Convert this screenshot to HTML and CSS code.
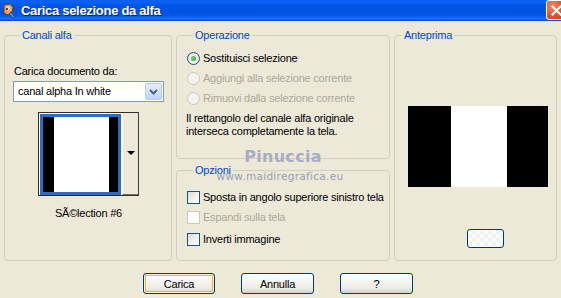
FILE: index.html
```html
<!DOCTYPE html>
<html lang="it">
<head>
<meta charset="utf-8">
<title>Carica selezione da alfa</title>
<link rel="stylesheet" href="styles.css">
</head>
<body>
<div class="window">
  <div class="titlebar">
    <svg class="appicon" width="16" height="16" viewBox="0 0 16 16">
      <path d="M3 2 L9 1 L12 4 L11 9 L7 12 L3 10 Z" fill="#E8A060" stroke="#7A3A10" stroke-width="1"/>
      <path d="M5 4 L8 3 L10 6 L7 8 Z" fill="#FFD9A0"/>
      <path d="M10 9 L14 14 L12 15 L8 11 Z" fill="#5A8FE0" stroke="#1A3A80" stroke-width="0.8"/>
      <circle cx="6" cy="6" r="1" fill="#3A1A00"/>
    </svg>
    <span class="title">Carica selezione da alfa</span>
    <span class="close">
      <svg width="21" height="21" viewBox="0 0 21 21"><path d="M6 6 L15 15 M15 6 L6 15" stroke="#fff" stroke-width="2.2" stroke-linecap="square"/></svg>
    </span>
  </div>
  <div class="content">
    <div class="panels">
      <section class="group g-canali">
        <h2 class="legend">Canali alfa</h2>
        <div class="field-label">Carica documento da:</div>
        <div class="select">
          <span class="sel-text">canal alpha In white</span>
          <span class="sel-btn"><svg width="9" height="6" viewBox="0 0 9 6"><path d="M1 1 L4.5 4.5 L8 1" fill="none" stroke="#4D6185" stroke-width="2"/></svg></span>
        </div>
        <div class="thumb">
          <div class="thumb-img">
            <div class="bar-black b1"></div>
            <div class="bar-white w1"></div>
            <div class="bar-black b2"></div>
          </div>
          <div class="thumb-btn"><span class="tri"></span></div>
        </div>
        <div class="caption">SÃ©lection #6</div>
      </section>
      <div class="col">
        <section class="group g-op">
          <h2 class="legend">Operazione</h2>
          <div class="rows">
            <div class="row"><span class="radio checked"></span><span>Sostituisci selezione</span></div>
            <div class="row disabled"><span class="radio"></span><span>Aggiungi alla selezione corrente</span></div>
            <div class="row disabled"><span class="radio"></span><span>Rimuovi dalla selezione corrente</span></div>
          </div>
          <p class="note">Il rettangolo del canale alfa originale<br>interseca completamente la tela.</p>
        </section>
        <section class="group g-opt">
          <h2 class="legend">Opzioni</h2>
          <div class="rows">
            <div class="row"><span class="check"></span><span>Sposta in angolo superiore sinistro tela</span></div>
            <div class="row disabled"><span class="check"></span><span>Espandi sulla tela</span></div>
            <div class="row r3"><span class="check"></span><span>Inverti immagine</span></div>
          </div>
        </section>
      </div>
      <section class="group g-ant">
        <h2 class="legend">Anteprima</h2>
        <div class="preview">
          <div class="pv-black p1"></div>
          <div class="pv-white"></div>
          <div class="pv-black p2"></div>
        </div>
        <div class="small-btn"></div>
      </section>
    </div>
    <div class="buttons">
      <button class="btn default">Carica</button>
      <button class="btn">Annulla</button>
      <button class="btn">?</button>
    </div>
    <div class="watermark">
      <div class="wm-name">Pinuccia</div>
      <div class="wm-url">www.maidiregrafica.eu</div>
    </div>
  </div>
</div>
</body>
</html>
```
FILE: styles.css
```css
* { box-sizing: border-box; }
html, body { margin: 0; padding: 0; }
body {
  width: 561px;
  height: 298px;
  overflow: hidden;
  background: #ECE9D8;
  font-family: Tahoma, "Liberation Sans", Arial, sans-serif;
  font-size: 11px;
  line-height: 13px;
  letter-spacing: -0.22px;
  color: #000;
}
.window { width: 561px; height: 298px; }

.titlebar {
  height: 21px;
  display: flex;
  align-items: center;
  position: relative;
  letter-spacing: normal;
  background: linear-gradient(#0A5FEC 0, #0C62F2 8%, #0056E6 25%, #0053E0 55%, #0058EA 75%, #1A6DFF 88%, #0A5AF0 94%, #0046C8 100%);
}
.appicon { margin: 0 4px 0 1px; flex: none; }
.title {
  color: #fff;
  font-family: "Liberation Sans", Arial, sans-serif;
  font-weight: bold;
  font-size: 13px;
  letter-spacing: -0.3px;
  text-shadow: 1px 1px 0 #0A1883;
}
.close {
  position: absolute;
  right: -6px;
  top: 0;
  width: 21px;
  height: 20px;
  border: 1px solid #fff;
  border-radius: 3px;
  background: radial-gradient(circle at 30% 30%, #F08B6A 0, #E2583A 45%, #C33818 100%);
  display: flex;
  align-items: center;
  justify-content: center;
}
.close svg { display: block; }

.content { position: relative; height: 277px; }
.panels {
  display: flex;
  gap: 4px;
  padding: 14px 0 0 4px;
}
.group {
  border: 1px solid #D0D0BF;
  border-radius: 4px;
  margin: 0;
  height: 226px;
}
.legend {
  margin: -7px 0 0 7px;
  padding: 0 2px;
  width: fit-content;
  background: #ECE9D8;
  color: #0046D5;
  font-size: 11px;
  font-weight: normal;
  line-height: 13px;
}

/* Canali alfa */
.g-canali { width: 168px; padding: 0 7px 0 8px; }
.field-label { margin-top: 23px; padding-left: 1px; }
.select {
  margin-top: 3px;
  width: 151px;
  height: 21px;
  border: 1px solid #7F9DB9;
  background: #fff;
  display: flex;
  align-items: center;
  justify-content: space-between;
  padding: 1px;
}
.sel-text { padding-left: 3px; }
.sel-btn {
  width: 17px;
  height: 17px;
  border: 1px solid #B9CBF3;
  border-radius: 2px;
  background: linear-gradient(#E4ECFE, #C1D3FB);
  display: flex;
  align-items: center;
  justify-content: center;
}
.sel-btn svg { display: block; }
.thumb {
  margin: 10px 0 0 25px;
  width: 101px;
  height: 84px;
  border: 1px solid #2E2E2E;
  border-right-color: #404040;
  padding: 1px 0 0 1px;
  background: #fff;
  display: flex;
}
.thumb-img {
  width: 81px;
  height: 81px;
  border: 3px solid #316AC5;
  display: flex;
}
.bar-black { background: #000; }
.b1 { width: 11px; }
.w1 { width: 55px; background: #fff; }
.b2 { flex: 1; }
.thumb-btn {
  flex: 1;
  margin: -1px 0 0 1px;
  background: #ECE9D8;
  border-left: 1px solid #fff;
  border-bottom: 1px solid #716F64;
  display: flex;
  align-items: center;
  justify-content: center;
}
.tri {
  width: 0;
  height: 0;
  border-left: 4px solid transparent;
  border-right: 4px solid transparent;
  border-top: 4px solid #000;
  margin: 0 0 1px 1px;
}
.caption { margin-top: 11px; text-align: center; }

/* column 2 */
.col { display: flex; flex-direction: column; gap: 11px; width: 214px; }
.g-op { height: 124px; padding: 0 0 0 9px; }
.g-opt { height: 91px; padding: 0 0 0 9px; }
.rows { display: flex; flex-direction: column; }
.g-op .rows { margin-top: 6px; }
.g-opt .rows { margin-top: 10px; }
.row {
  height: 20px;
  display: flex;
  align-items: center;
  gap: 3px;
  padding-left: 1px;
  white-space: nowrap;
}
.row.r3 { height: 22px; padding-top: 2px; }
.row.disabled { color: #ACA899; }
.radio {
  width: 13px;
  height: 13px;
  border-radius: 50%;
  border: 1px solid #1C5180;
  background: radial-gradient(circle at 65% 65%, #fff 0, #F0F0EA 50%, #D6D5CC 100%);
  display: flex;
  align-items: center;
  justify-content: center;
  flex: none;
}
.radio.checked::after {
  content: "";
  width: 5px;
  height: 5px;
  border-radius: 50%;
  background: radial-gradient(circle at 40% 40%, #5CE05C, #21A121);
}
.row.disabled .radio {
  border-color: #CAC8BB;
  background: #F4F3EE;
}
.check {
  width: 13px;
  height: 13px;
  border: 1px solid #1C5180;
  background: linear-gradient(135deg, #DCDCD7 0, #F0F0EA 50%, #fff 100%);
  flex: none;
}
.row.disabled .check {
  border-color: #CAC8BB;
  background: #fff;
}
.note { margin: 4px 0 0 0; white-space: nowrap; }

/* Anteprima */
.g-ant { width: 163px; }
.preview {
  margin: 64px 0 0 13px;
  width: 140px;
  height: 81px;
  display: flex;
}
.pv-black { background: #000; }
.p1 { width: 43px; }
.pv-white { width: 56px; background: #fff; }
.p2 { flex: 1; }
.small-btn {
  margin: 42px 0 0 72px;
  width: 37px;
  height: 19px;
  border: 1px solid #003C74;
  border-radius: 3px;
  background:
    linear-gradient(45deg, #F2F2F0 25%, transparent 25%, transparent 75%, #F2F2F0 75%),
    linear-gradient(45deg, #F2F2F0 25%, transparent 25%, transparent 75%, #F2F2F0 75%),
    #FCFCFB;
  background-size: 8px 8px;
  background-position: 0 0, 4px 4px;
}

/* bottom buttons */
.buttons {
  display: flex;
  gap: 26px;
  padding: 12px 0 0 143px;
}
.btn {
  width: 73px;
  height: 21px;
  padding: 0;
  border: 1px solid #003C74;
  border-radius: 3px;
  background: linear-gradient(#FFFFFF 0, #F5F4F0 40%, #ECEBE6 75%, #D6D0C5 100%);
  font-family: Tahoma, "Liberation Sans", Arial, sans-serif;
  font-size: 11px;
  letter-spacing: -0.22px;
  color: #000;
}
.btn.default {
  width: 72px;
  box-shadow: inset 0 0 0 1px #FFF0CF, inset 0 0 0 2px #F8B330;
}

/* watermark */
.watermark {
  position: absolute;
  left: 210px;
  top: 126px;
  width: 140px;
  text-align: center;
  pointer-events: none;
  letter-spacing: normal;
}
.wm-name {
  font-family: "DejaVu Sans", Verdana, sans-serif;
  font-weight: bold;
  font-size: 16px;
  line-height: 20px;
  color: #A9ACC2;
  letter-spacing: 0.3px;
  padding-left: 6px;
}
.wm-url {
  font-family: "DejaVu Sans", Verdana, sans-serif;
  font-size: 10.5px;
  line-height: 12px;
  color: #9A9EB4;
  margin-top: 3px;
  letter-spacing: 0.3px;
  padding-left: 0;
}
```
